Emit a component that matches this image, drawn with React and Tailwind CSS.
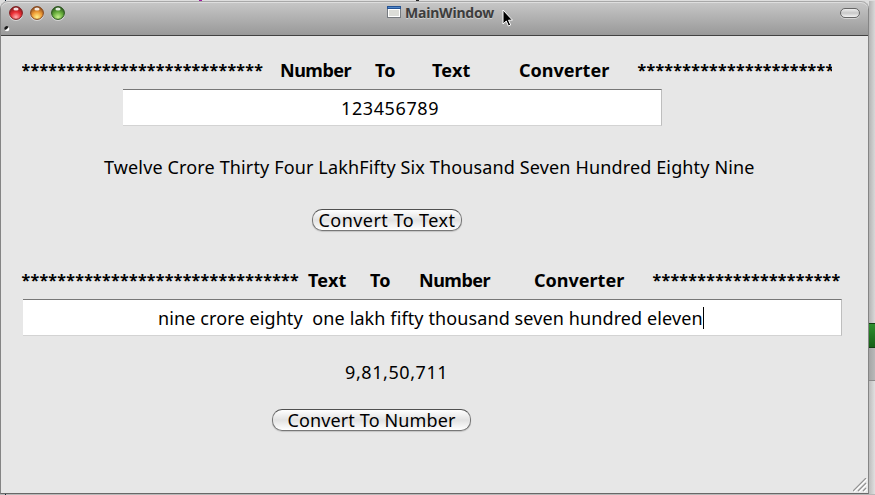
import React from "react";

function Light({ id, dark, mid, glow }) {
  return (
    <svg width="16" height="17" viewBox="0 0 16 17" className="block">
      <defs>
        <radialGradient id={id} cx="50%" cy="82%" r="80%">
          <stop offset="0" stopColor={glow} />
          <stop offset="0.5" stopColor={mid} />
          <stop offset="1" stopColor={dark} />
        </radialGradient>
      </defs>
      <circle cx="8" cy="9" r="7" fill="#d6d6d6" />
      <circle cx="8" cy="8" r="6.4" fill={`url(#${id})`} stroke={dark} strokeWidth="1" />
      <ellipse cx="8" cy="4" rx="2.6" ry="1.5" fill="#fff" opacity="0.85" />
    </svg>
  );
}

function TitleBar() {
  return (
    <header className="relative flex h-[35px] shrink-0 items-start rounded-t-[7px] border-b border-[#424242] bg-linear-to-b from-[#c9c9c9] to-[#999999] shadow-[inset_0_1px_0_#a8a8a8,inset_0_2px_0_#dedede]">
      <div className="flex gap-[5px] pt-[4px] pl-[7px]">
        <Light id="close" dark="#7d1a1c" mid="#ea2c33" glow="#ffb0b0" />
        <Light id="minimise" dark="#84451b" mid="#ee9b35" glow="#fff08a" />
        <Light id="zoom" dark="#26521a" mid="#67ad3c" glow="#c6ef8c" />
      </div>
      <div className="ml-[321px] flex items-start pt-[4px]">
        <svg width="14" height="12" viewBox="0 0 14 12" className="mt-px block">
          <rect x="0.5" y="0.5" width="13" height="11" fill="#fff" stroke="#777b80" />
          <rect width="14" height="3" fill="#245395" />
          <rect x="1" y="1" width="12" height="1" fill="#4f86c9" />
          <rect x="2" y="4" width="10" height="6" fill="#dcddd8" />
        </svg>
        <span className="ml-[4px] whitespace-pre text-[14px] leading-[16px] font-bold tracking-[-0.2px] text-[#3d3d3d] [text-shadow:0_1px_0_#d0d0d0]">MainWindow</span>
      </div>
      <svg width="11" height="18" viewBox="0 0 11 18" className="absolute top-[8px] left-[501px]">
        <path d="M1 1v14l3.3-3 2.1 5 2.3-1-2.2-4.8H10.5z" fill="#000" stroke="#fff" strokeWidth="1" />
      </svg>
      <div className="mt-[7px] mr-[8px] ml-auto h-[10px] w-[20px] rounded-[5px] border border-[#666] bg-linear-to-b from-[#eee] via-[#c8c8c8] to-[#f4f4f4] shadow-[0_1px_0_#d4d4d4]" />
      <svg width="6" height="6" viewBox="0 0 6 6" className="absolute top-[25px] left-[3px]">
        <circle cx="3" cy="3" r="2.3" fill="#fff" />
        <path d="M1 4A2.3 2.3 0 0 1 4.5 1L3 3z" fill="#161616" />
      </svg>
    </header>
  );
}

function Field({ className, children }) {
  return (
    <div className={`flex h-[37px] items-center border-t border-r border-b border-t-[#777] border-r-[#bebebe] border-b-[#d3d3d3] bg-white pt-[2px] ${className}`}>
      {children}
    </div>
  );
}

function PushButton({ className, children }) {
  return (
    <button className={`flex h-[22px] items-center justify-center whitespace-pre rounded-[10px] border border-[#777] border-t-[#505050] bg-linear-to-b from-[#fff] via-[#e2e2e2] to-[#fff] shadow-[0_1px_1px_#c4c4c4] ${className}`}>
      {children}
    </button>
  );
}

const stars = (n) => "*".repeat(n);

export default function App() {
  return (
    <div className="flex h-[495px] w-[875px] flex-col overflow-hidden bg-[#dedede] font-['Noto_Sans','Open_Sans',sans-serif] text-[18px] text-black">
      <div className="flex h-px shrink-0">
        <i className="ml-[5px] h-px w-px bg-[#123]" />
        <i className="ml-[193px] h-px w-[3px] bg-[#a018a0]" />
        <i className="ml-[214px] h-px w-[3px] bg-[#222]" />
      </div>
      <div className="flex h-[493px] shrink-0">
        <main className="flex w-[869px] shrink-0 flex-col rounded-t-[8px] border-r border-b border-l border-[#858585] border-b-[#686868] bg-[#e7e7e7]">
          <TitleBar />
          <div className="relative flex flex-1 flex-col items-start pl-[21px]">
            <div className="mt-[22px] flex h-[24px] w-[810px] overflow-hidden whitespace-pre font-bold leading-[24px]">
              <span className="-ml-[0.5px] w-[258.5px] shrink-0 text-[16px] tracking-[0.28px]">{stars(27)}</span>
              <span className="w-[95px] shrink-0 tracking-[-0.5px]">Number</span>
              <span className="w-[57px] shrink-0">To</span>
              <span className="w-[87px] shrink-0 tracking-[0.2px]">Text</span>
              <span className="w-[118.5px] shrink-0">Converter</span>
              <span className="shrink-0 text-[16px] tracking-[0.28px]">{stars(22)}</span>
            </div>
            <Field className="mt-[7px] ml-[101px] w-[539px] pl-[218px]">
              <span className="tracking-[0.6px]">123456789</span>
            </Field>
            <p className="mt-[29px] ml-[82px] h-[24px] whitespace-pre leading-[24px] tracking-[0.14px]">Twelve Crore Thirty Four LakhFifty Six Thousand Seven Hundred Eighty Nine</p>
            <PushButton className="mt-[30px] ml-[290px] w-[150px] tracking-[0.45px]">Convert To Text</PushButton>
            <div className="mt-[37px] flex h-[24px] w-[820px] whitespace-pre font-bold leading-[24px]">
              <span className="-ml-[0.5px] w-[286.5px] shrink-0 text-[16px] tracking-[0.28px]">{stars(31)}</span>
              <span className="w-[62px] shrink-0 tracking-[0.2px]">Text</span>
              <span className="w-[49px] shrink-0">To</span>
              <span className="w-[115px] shrink-0 tracking-[-0.5px]">Number</span>
              <span className="w-[118.5px] shrink-0">Converter</span>
              <span className="shrink-0 text-[16px] tracking-[0.28px]">{stars(21)}</span>
            </div>
            <Field className="mt-[7px] ml-[1px] w-[819px] pl-[135px]">
              <span className="whitespace-pre tracking-[0.11px]">nine crore eighty  one lakh fifty thousand seven hundred eleven</span>
              <i className="-mt-px h-[22px] w-px bg-black" />
            </Field>
            <p className="mt-[24px] ml-[323px] h-[24px] leading-[24px] tracking-[0.58px]">9,81,50,711</p>
            <PushButton className="mt-[25px] ml-[250px] w-[199px] tracking-[0.12px]">Convert To Number</PushButton>
            <svg width="14" height="14" viewBox="0 0 14 14" className="absolute right-[1px] bottom-[1px]">
              <path d="M1 14L14 1M6 14L14 6M11 14L14 11" stroke="#fff" strokeWidth="1.4" />
              <path d="M0 13L13 0M5 13L13 5M10 13L13 10" stroke="#929292" strokeWidth="1.2" />
            </svg>
          </div>
        </main>
        <aside className="flex w-[6px] flex-col">
          <div className="h-[322px] bg-linear-to-r from-[#b4b4b4] to-[#d8d8d8]" />
          <div className="h-[25px] border-y border-[#123f12] bg-linear-to-b from-[#2f8f2f] to-[#176017]" />
          <div className="h-[33px] border-b border-[#8b8b8b] bg-linear-to-r from-[#a5a5a5] to-[#b9b9b9]" />
          <div className="flex-1 bg-linear-to-r from-[#bdbdbd] to-[#e0e0e0]" />
        </aside>
      </div>
      <div className="h-px bg-[#b8b8b8] pl-[5px]"><i className="block h-px w-px bg-[#123]" /></div>
    </div>
  );
}
